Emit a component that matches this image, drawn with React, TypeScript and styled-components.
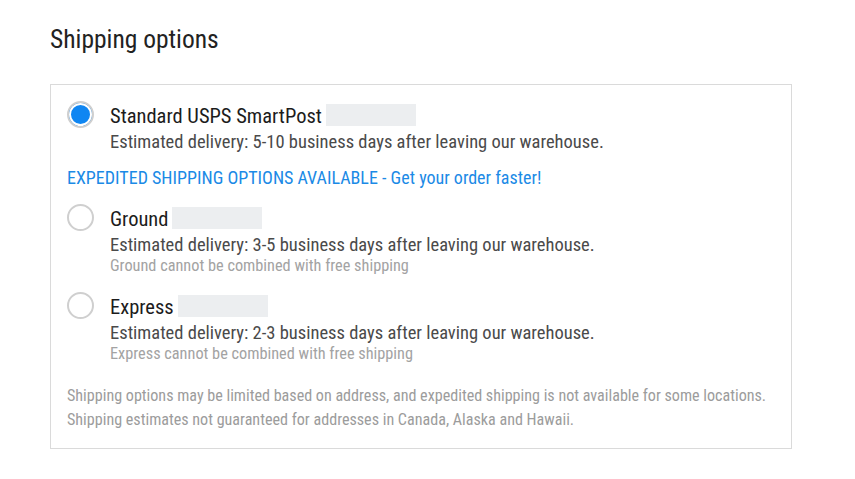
import React from 'react'
import styled, { createGlobalStyle } from 'styled-components'

const GlobalStyle = createGlobalStyle`
    body {
        margin: 0;
        background: #ffffff;
        font-family: "Roboto Condensed", Roboto, sans-serif;
    }
`

type ShippingOption = {
    id: string
    name: string
    estimate: string
    note?: string
}

const standard: ShippingOption = {
    id: 'standard',
    name: 'Standard USPS SmartPost',
    estimate: 'Estimated delivery: 5-10 business days after leaving our warehouse.',
}

const expedited: ShippingOption[] = [
    {
        id: 'ground',
        name: 'Ground',
        estimate: 'Estimated delivery: 3-5 business days after leaving our warehouse.',
        note: 'Ground cannot be combined with free shipping',
    },
    {
        id: 'express',
        name: 'Express',
        estimate: 'Estimated delivery: 2-3 business days after leaving our warehouse.',
        note: 'Express cannot be combined with free shipping',
    },
]

const Option: React.FC<{ option: ShippingOption; selected: boolean; gap: number }> = ({ option, selected, gap }) => (
    <OptionRow $gap={gap}>
        <Radio $checked={selected} />
        <OptionBody>
            <OptionName>
                {option.name}
                <PricePlaceholder />
            </OptionName>
            <Estimate>{option.estimate}</Estimate>
            {option.note && <Note>{option.note}</Note>}
        </OptionBody>
    </OptionRow>
)

const App: React.FC = () => {
    const selected = 'standard'

    return (
        <>
            <GlobalStyle />
            <Page>
                <Title>Shipping options</Title>
                <Panel>
                    <Option option={standard} selected={selected === standard.id} gap={0} />
                    <Expedited>EXPEDITED SHIPPING OPTIONS AVAILABLE - Get your order faster!</Expedited>
                    {expedited.map((option, i) => (
                        <Option key={option.id} option={option} selected={selected === option.id} gap={i === 0 ? 14 : 17} />
                    ))}
                    <Disclaimer>
                        Shipping options may be limited based on address, and expedited shipping is not available for some locations.
                        <br />
                        Shipping estimates not guaranteed for addresses in Canada, Alaska and Hawaii.
                    </Disclaimer>
                </Panel>
            </Page>
        </>
    )
}

const Page = styled.div`
    padding: 24px 0 0 50px;
`

const Title = styled.h2`
    margin: 0 0 30px;
    font-size: 25.5px;
    line-height: 30px;
    font-weight: 400;
    color: #222222;
`

const Panel = styled.div`
    box-sizing: border-box;
    width: 742px;
    border: 1px solid #dadada;
    padding: 16px;
`

const OptionRow = styled.div<{ $gap: number }>`
    display: flex;
    align-items: flex-start;
    gap: 16px;
    margin-top: ${(p) => p.$gap}px;
`

const Radio = styled.span<{ $checked: boolean }>`
    box-sizing: border-box;
    flex: none;
    width: 27px;
    height: 27px;
    border-radius: 50%;
    border: 2px solid #cfcfcf;
    background: ${(p) => (p.$checked ? '#0f86f2' : '#ffffff')};
    box-shadow: ${(p) => (p.$checked ? 'inset 0 0 0 2px #ffffff' : 'none')};
`

const OptionBody = styled.div`
    padding-top: 2px;
`

const OptionName = styled.div`
    font-size: 20.5px;
    line-height: 27px;
    color: #1c1c1c;
`

const PricePlaceholder = styled.span`
    display: inline-block;
    vertical-align: top;
    width: 90px;
    height: 22px;
    margin: 1px 0 0 4px;
    background: #eceef0;
`

const Estimate = styled.div`
    font-size: 18.5px;
    line-height: 24px;
    color: #4a4a4a;
`

const Note = styled.div`
    font-size: 16.3px;
    line-height: 18px;
    color: #a3a3a3;
`

const Expedited = styled.div`
    margin-top: 12px;
    font-size: 18px;
    line-height: 24px;
    color: #1b8ae6;
`

const Disclaimer = styled.p`
    margin: 21px 0 0;
    font-size: 16.1px;
    line-height: 24px;
    color: #9c9c9c;
    white-space: nowrap;
`

export default App
